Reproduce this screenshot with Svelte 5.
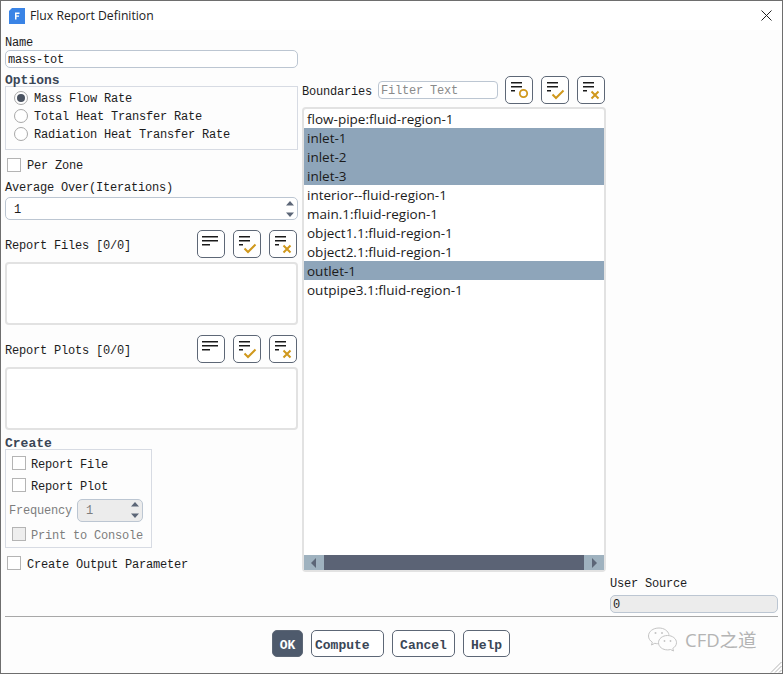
<script>
  const boundaries = [
    { name: "flow-pipe:fluid-region-1", selected: false },
    { name: "inlet-1", selected: true },
    { name: "inlet-2", selected: true },
    { name: "inlet-3", selected: true },
    { name: "interior--fluid-region-1", selected: false },
    { name: "main.1:fluid-region-1", selected: false },
    { name: "object1.1:fluid-region-1", selected: false },
    { name: "object2.1:fluid-region-1", selected: false },
    { name: "outlet-1", selected: true },
    { name: "outpipe3.1:fluid-region-1", selected: false },
  ];

  const rates = ["Mass Flow Rate", "Total Heat Transfer Rate", "Radiation Heat Transfer Rate"];
</script>

{#snippet toolIcon(kind)}
  <button class="tool" type="button" aria-label={kind}>
    <svg width="26" height="26" viewBox="0 0 26 26">
      {#if kind === "list"}
        <path d="M4 5h16v1.6H4zM4 9h16v1.6H4zM4 13h8v1.6H4z" fill="#1a1a1a" />
      {:else}
        <path d="M5 5h11v1.6H5zM5 9h11v1.6H5zM5 13h4v1.6H5z" fill="#1a1a1a" />
      {/if}
      {#if kind === "invert"}
        <circle cx="17.500" cy="16.500" r="3.700" fill="none" stroke="#d0981c" stroke-width="1.800" />
      {:else if kind === "check"}
        <path d="M10.500 17.500l3.500 3.500 7.500-7.500" fill="none" stroke="#d0981c" stroke-width="2" />
      {:else if kind === "clear"}
        <path d="M13.500 14.500l7 7M20.500 14.500l-7 7" fill="none" stroke="#d0981c" stroke-width="2" />
      {/if}
    </svg>
  </button>
{/snippet}

{#snippet arrows()}
  <span class="arrows">
    <svg width="8" height="22" viewBox="0 0 8 22">
      <path d="M4 3l4 4.500H0zM4 19l4-4.500H0z" fill="#5c6677" />
    </svg>
  </span>
{/snippet}

<div class="window">
  <header class="titlebar">
    <svg class="app-icon" width="16" height="16" viewBox="0 0 16 16">
      <path d="M3 0h13v16H0V3z" fill="#3a84e6" />
      <path d="M6 4.500h4.500v1.400H7.500v1.500h2.500v1.300H7.500V11.500H6z" fill="#fff" />
    </svg>
    <span class="title">Flux Report Definition</span>
    <svg class="close" width="11" height="11" viewBox="0 0 11 11">
      <path d="M.5.500l10 10M10.500.500l-10 10" stroke="#222" stroke-width="1" fill="none" />
    </svg>
  </header>

  <main class="body">
    <section class="left">
      <div class="label name-label">Name</div>
      <input class="field" value="mass-tot" />

      <div class="group-title options-title">Options</div>
      <div class="options">
        {#each rates as rate, i}
          <div class="radio-row">
            <span class="radio" class:on={i === 0}></span>
            <span class="txt">{rate}</span>
          </div>
        {/each}
      </div>

      <div class="check-row per-zone">
        <span class="check"></span>
        <span class="txt">Per Zone</span>
      </div>

      <div class="label avg-label">Average Over(Iterations)</div>
      <div class="spinner avg">
        <span class="txt">1</span>
        {@render arrows()}
      </div>

      <div class="list-head files-head">
        <span class="label head-text">Report Files [0/0]</span>
        <div class="tools">
          {@render toolIcon("list")}
          {@render toolIcon("check")}
          {@render toolIcon("clear")}
        </div>
      </div>
      <div class="small-list"></div>

      <div class="list-head plots-head">
        <span class="label head-text">Report Plots [0/0]</span>
        <div class="tools">
          {@render toolIcon("list")}
          {@render toolIcon("check")}
          {@render toolIcon("clear")}
        </div>
      </div>
      <div class="small-list"></div>

      <div class="group-title create-title">Create</div>
      <div class="create">
        <div class="check-row tall">
          <span class="check"></span>
          <span class="txt low">Report File</span>
        </div>
        <div class="check-row tall">
          <span class="check"></span>
          <span class="txt low">Report Plot</span>
        </div>
        <div class="freq">
          <span class="muted txt">Frequency</span>
          <div class="spinner disabled">
            <span class="txt">1</span>
            {@render arrows()}
          </div>
        </div>
        <div class="check-row print">
          <span class="check disabled"></span>
          <span class="muted txt low">Print to Console</span>
        </div>
      </div>

      <div class="check-row output">
        <span class="check"></span>
        <span class="txt low">Create Output Parameter</span>
      </div>
    </section>

    <section class="right">
      <div class="boundary-head">
        <span class="label txt">Boundaries</span>
        <input class="filter" placeholder="Filter Text" />
        <div class="tools">
          {@render toolIcon("invert")}
          {@render toolIcon("check")}
          {@render toolIcon("clear")}
        </div>
      </div>

      <div class="boundary-list">
        <div class="rows">
          {#each boundaries as row}
            <div class="row" class:selected={row.selected}>{row.name}</div>
          {/each}
        </div>
        <div class="hscroll">
          <span class="end">
            <svg width="8" height="10" viewBox="0 0 8 10"><path d="M6 0v10L1 5z" fill="#5c6677" /></svg>
          </span>
          <span class="thumb"></span>
          <span class="end">
            <svg width="8" height="10" viewBox="0 0 8 10"><path d="M2 0v10l5-5z" fill="#5c6677" /></svg>
          </span>
        </div>
      </div>

      <div class="source">
        <div class="label">User Source</div>
        <div class="source-field">0</div>
      </div>
    </section>
  </main>

  <footer class="footer">
    <div class="buttons">
      <button class="btn ok" type="button">OK</button>
      <button class="btn compute" type="button">Compute</button>
      <button class="btn cancel" type="button">Cancel</button>
      <button class="btn help" type="button">Help</button>
    </div>

    <div class="mark">
      <svg width="32" height="26" viewBox="0 0 32 26" fill="none" stroke="#c4c4c4" stroke-width="1">
        <path d="M12 2C6 2 1.500 5.500 1.500 10c0 2.600 1.500 4.800 3.800 6.200L4.500 19l3.300-1.700c1 .3 2 .4 3 .4" />
        <path d="M12 2c5 0 9.200 2.800 10 6.800" />
        <path d="M20.500 9.500c-5 0-9 3.200-9 7.200s4 7.200 9 7.200c1 0 2-.1 3-.4l3 1.500-.7-2.600c2.200-1.300 3.700-3.400 3.700-5.700 0-4-4-7.200-9-7.200z" />
        <circle cx="8.500" cy="7" r="1" fill="#c4c4c4" stroke="none" />
        <circle cx="15" cy="7" r="1" fill="#c4c4c4" stroke="none" />
        <circle cx="17.500" cy="15" r=".9" fill="#c4c4c4" stroke="none" />
        <circle cx="23.500" cy="15" r=".9" fill="#c4c4c4" stroke="none" />
      </svg>
      <span>CFD之道</span>
    </div>

    <svg class="grip" width="12" height="12" viewBox="0 0 12 12" stroke="#b5b5b5" stroke-width="1">
      <path d="M11.500 1L1 11.500M11.500 5L5 11.500M11.500 9L9 11.500" />
    </svg>
  </footer>
</div>

<style>
  :global(body) {
    margin: 0;
    background: #fdfdfd;
  }

  .window {
    box-sizing: border-box;
    width: 783px;
    height: 674px;
    display: flex;
    flex-direction: column;
    border: 1px solid #6e6e6e;
    background: #fdfdfd;
    font-family: "Liberation Mono", "DejaVu Sans Mono", monospace;
    font-size: 12px;
    letter-spacing: -0.2px;
    color: #1c1c1c;
    overflow: hidden;
  }

  .titlebar {
    height: 29px;
    flex: none;
    display: flex;
    align-items: center;
    background: #fff;
    padding: 0 10px 0 8px;
  }

  .app-icon {
    margin-right: 5px;
  }

  .title {
    flex: 1;
    font-family: "Open Sans", "Noto Sans", sans-serif;
    font-size: 12.2px;
    letter-spacing: 0;
    color: #222;
  }

  .body {
    flex: 1;
    min-height: 0;
    display: flex;
  }

  .left {
    width: 297px;
    flex: none;
    margin-left: 4px;
  }

  .label {
    height: 14px;
    line-height: 16px;
  }

  .txt {
    padding-top: 2px;
  }

  .low {
    padding-top: 3px;
  }

  .head-text {
    height: auto;
    padding-top: 4px;
  }

  .name-label {
    margin-top: 5px;
  }

  .field {
    display: block;
    box-sizing: border-box;
    width: 293px;
    height: 18px;
    margin: 0;
    margin-top: 1px;
    padding: 2px 2px 0;
    border: 1px solid #bcc6d2;
    border-radius: 5px;
    background: #fff;
    font: inherit;
    letter-spacing: inherit;
    color: inherit;
    outline: none;
  }

  .group-title {
    font-weight: 700;
    color: #3a4656;
    height: 14px;
    line-height: 17px;
    font-size: 13px;
    letter-spacing: 0;
  }

  .options-title {
    margin-top: 4px;
  }

  .options {
    box-sizing: border-box;
    width: 293px;
    height: 64px;
    padding: 2px 0 0 8px;
    border: 1px solid #d7dbe3;
  }

  .radio-row {
    display: flex;
    align-items: center;
    gap: 6px;
    height: 18px;
  }

  .radio {
    box-sizing: border-box;
    width: 14px;
    height: 14px;
    border: 1px solid #a8a8a8;
    border-radius: 50%;
    background: #fff;
    display: flex;
    align-items: center;
    justify-content: center;
  }

  .radio.on::after {
    content: "";
    width: 8px;
    height: 8px;
    border-radius: 50%;
    background: #4a5361;
  }

  .check-row {
    display: flex;
    align-items: center;
    gap: 6px;
  }

  .check {
    box-sizing: border-box;
    flex: none;
    width: 14px;
    height: 14px;
    border: 1px solid #b4b4b4;
    background: #fff;
  }

  .check.disabled {
    background: #eee;
  }

  .per-zone {
    height: 14px;
    margin: 8px 0 0 2px;
  }

  .avg-label {
    margin-top: 8px;
  }

  .spinner {
    box-sizing: border-box;
    display: flex;
    align-items: center;
    justify-content: space-between;
    border: 1px solid #bcc6d2;
    border-radius: 5px;
    background: #fff;
  }

  .avg {
    width: 293px;
    height: 23px;
    margin-top: 3px;
    padding: 0 3px 0 8px;
  }

  .arrows {
    display: flex;
  }

  .list-head {
    width: 292px;
    height: 28px;
    display: flex;
    align-items: center;
    justify-content: space-between;
  }

  .files-head,
  .plots-head {
    margin-top: 10px;
  }

  .tools {
    display: flex;
    gap: 8px;
  }

  .tool {
    box-sizing: border-box;
    width: 28px;
    height: 28px;
    padding: 0;
    border: 1px solid #5d6776;
    border-radius: 5px;
    background: #fff;
    display: block;
  }

  .tool svg {
    display: block;
  }

  .small-list {
    box-sizing: border-box;
    width: 293px;
    height: 63px;
    margin-top: 4px;
    border: 2px solid #e2e2e2;
    border-radius: 4px;
    background: #fff;
  }

  .create-title {
    margin-top: 5px;
  }

  .create {
    box-sizing: border-box;
    width: 147px;
    height: 99px;
    padding: 2px 0 0 6px;
    border: 1px solid #d7dbe3;
  }

  .tall {
    height: 22px;
    gap: 5px;
  }

  .freq {
    display: flex;
    align-items: center;
    gap: 5px;
    height: 24px;
    margin: 2px 0 0 -3px;
  }

  .spinner.disabled {
    width: 66px;
    height: 23px;
    padding: 0 3px 0 8px;
    background: #ececec;
    color: #7d7d7d;
  }

  .muted {
    color: #7d7d7d;
  }

  .print {
    height: 14px;
    margin-top: 5px;
    gap: 5px;
  }

  .output {
    height: 14px;
    margin: 8px 0 0 2px;
  }

  .right {
    flex: 1;
    min-width: 0;
  }

  .boundary-head {
    height: 28px;
    margin-top: 46px;
    display: flex;
    align-items: center;
  }

  .filter {
    box-sizing: border-box;
    width: 120px;
    height: 18px;
    margin: 0 7px 0 6px;
    padding: 2px 2px 0;
    border: 1px solid #bcc6d2;
    border-radius: 4px;
    background: #fff;
    font: inherit;
    letter-spacing: inherit;
    outline: none;
  }

  .filter::placeholder {
    color: #8a8a8a;
    opacity: 1;
  }

  .boundary-list {
    box-sizing: border-box;
    width: 304px;
    height: 465px;
    margin-top: 3px;
    display: flex;
    flex-direction: column;
    border: 2px solid #e2e2e2;
    border-radius: 4px;
    background: #fff;
  }

  .rows {
    flex: 1;
    min-height: 0;
  }

  .row {
    height: 19px;
    line-height: 20px;
    padding-left: 3px;
    font-family: "Open Sans", "Noto Sans", sans-serif;
    font-size: 13.5px;
    letter-spacing: 0;
    color: #1b1b1b;
    white-space: nowrap;
  }

  .row.selected {
    background: #8ea5ba;
  }

  .hscroll {
    flex: none;
    height: 15px;
    display: flex;
  }

  .end {
    width: 20px;
    flex: none;
    background: #9fb2bf;
    display: flex;
    align-items: center;
    justify-content: center;
  }

  .thumb {
    flex: 1;
    background: #5b6375;
  }

  .source {
    width: 168px;
    margin: 4px 0 0 308px;
  }

  .source-field {
    box-sizing: border-box;
    height: 18px;
    line-height: 18px;
    margin-top: 5px;
    padding-left: 2px;
    border: 1px solid #bcc6d2;
    border-radius: 5px;
    background: #ececec;
  }

  .footer {
    position: relative;
    flex: none;
    height: 56px;
    margin: 0 4px;
    border-top: 1px solid #a8a8a8;
    display: flex;
  }

  .buttons {
    display: flex;
    gap: 8px;
    margin: 13px 0 0 267px;
  }

  .btn {
    box-sizing: border-box;
    height: 27px;
    padding: 3px 0 0;
    border: 1px solid #5d6776;
    border-radius: 5px;
    background: #fff;
    font: inherit;
    font-size: 13px;
    letter-spacing: 0;
    font-weight: 700;
    color: #3a4656;
  }

  .ok {
    width: 31px;
    background: #4e5a6c;
    color: #fff;
  }

  .compute {
    width: 73px;
    text-align: left;
    padding-left: 3px;
  }

  .cancel {
    width: 63px;
  }

  .help {
    width: 47px;
  }

  .mark {
    position: absolute;
    left: 642px;
    top: 9px;
    display: flex;
    align-items: center;
    gap: 6px;
    font-family: "Open Sans", "Noto Sans CJK SC", sans-serif;
    font-size: 18.500px;
    letter-spacing: 0;
    color: #b4b4b4;
  }

  .grip {
    position: absolute;
    right: -4px;
    bottom: 0;
  }
</style>
